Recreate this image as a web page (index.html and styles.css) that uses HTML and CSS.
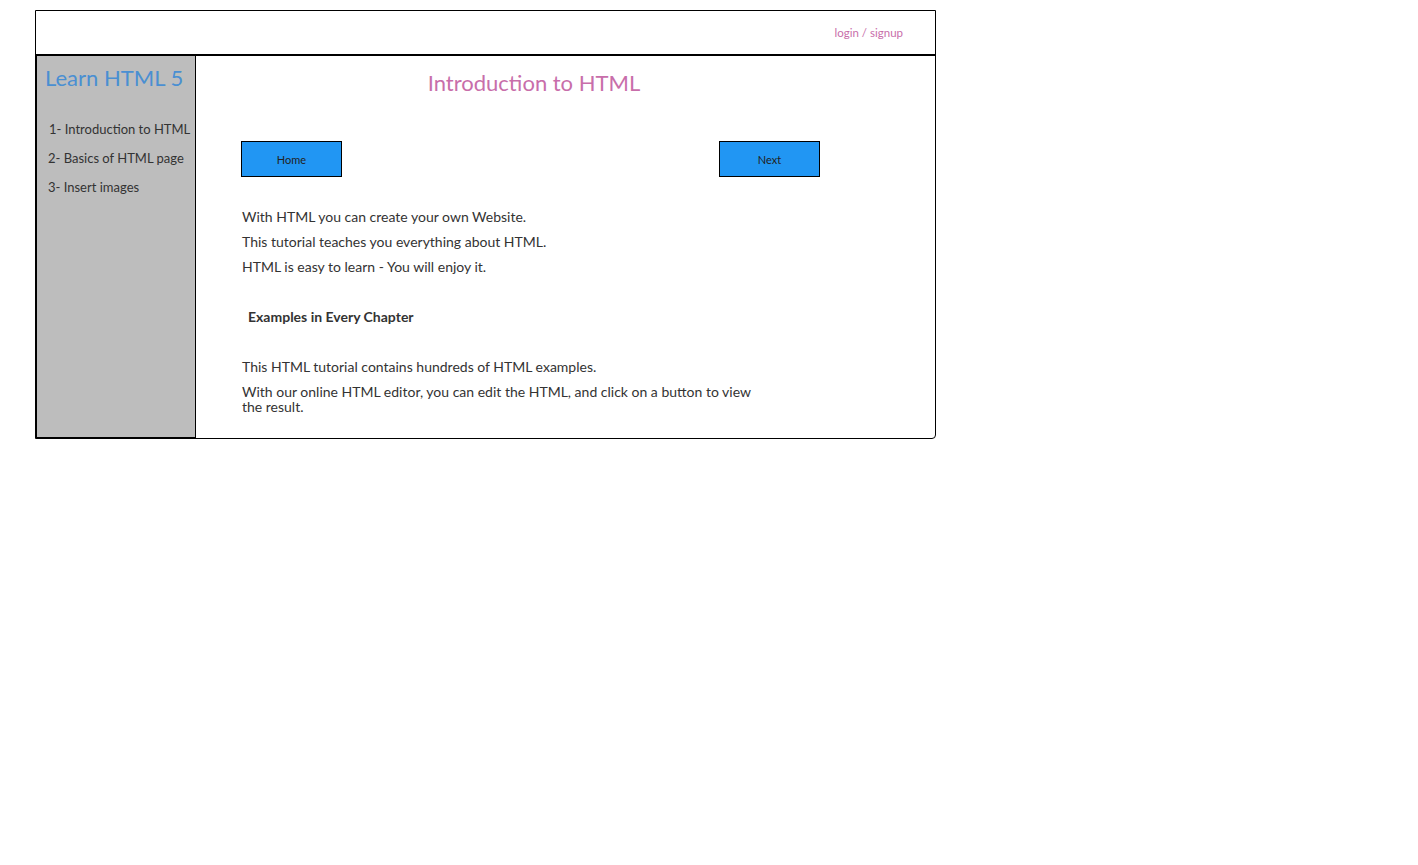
FILE: index.html
```html
<!DOCTYPE html>
<html>
<head>
<meta charset="utf-8">
<link rel="stylesheet" href="styles.css">
</head>
<body>
<div class="frame">
  <header class="header">
    <span class="login">login / signup</span>
  </header>
  <div class="body">
    <aside class="sidebar">
      <div class="brand">Learn HTML 5</div>
      <ul class="nav">
        <li class="nav-item first">1- Introduction to HTML</li>
        <li class="nav-item">2- Basics of HTML page</li>
        <li class="nav-item">3- Insert images</li>
      </ul>
    </aside>
    <main class="main">
      <h1 class="title">Introduction to HTML</h1>
      <div class="buttons">
        <button class="btn">Home</button>
        <button class="btn">Next</button>
      </div>
      <div class="text">
        <p class="line">With HTML you can create your own Website.</p>
        <p class="line">This tutorial teaches you everything about HTML.</p>
        <p class="line">HTML is easy to learn - You will enjoy it.</p>
      </div>
      <h2 class="subhead">Examples in Every Chapter</h2>
      <div class="text">
        <p class="line">This HTML tutorial contains hundreds of HTML examples.</p>
        <p class="line wrap">With our online HTML editor, you can edit the HTML, and click on a button to view the result.</p>
      </div>
    </main>
  </div>
</div>
</body>
</html>
```

FILE: styles.css
```css
* { box-sizing: border-box; }
body {
  margin: 0;
  font-family: "Source Sans Pro", Lato, "Liberation Sans", sans-serif;
  color: #333;
  background: #fff;
}
.frame {
  margin: 10px 0 0 35px;
  width: 901px;
  height: 429px;
  border: 1px solid #000;
  border-radius: 0 0 4px 0;
  display: flex;
  flex-direction: column;
}
.header {
  height: 45px;
  border-bottom: 2px solid #000;
  display: flex;
  justify-content: flex-end;
  align-items: center;
  padding-right: 32px;
}
.login {
  font-size: 11.5px;
  color: #c86eaa;
}
.body {
  flex: 1;
  display: flex;
}
.sidebar {
  width: 160px;
  background: #bdbdbd;
  border-left: 1px solid #000;
  border-right: 1px solid #000;
  border-bottom: 1px solid #000;
  padding: 9px 0 0 8px;
}
.brand {
  font-size: 22px;
  color: #4a8fd2;
  line-height: 26px;
}
.nav {
  list-style: none;
  margin: 24px 0 0 0;
  padding: 0 0 0 3px;
}
.nav-item {
  font-size: 13px;
  line-height: 29px;
  color: #333;
}
.nav-item.first { padding-left: 1px; }
.main {
  flex: 1;
  padding: 14px 0 0 45px;
}
.title {
  margin: 0;
  width: 586px;
  text-align: center;
  font-size: 22px;
  font-weight: normal;
  line-height: 26px;
  color: #c86eaa;
}
.buttons {
  margin-top: 45px;
  width: 579px;
  display: flex;
  justify-content: space-between;
}
.btn {
  width: 101px;
  height: 36px;
  background: #2196f3;
  border: 1px solid #000;
  border-radius: 0;
  font-family: inherit;
  font-size: 11px;
  color: #222;
  padding: 0;
}
.text {
  margin-left: 1px;
  margin-top: 27px;
}
.line {
  margin: 0;
  font-size: 14px;
  line-height: 25px;
}
.line.wrap {
  width: 530px;
  line-height: 15px;
  margin-top: 5px;
}
.subhead {
  margin: 28px 0 0 7px;
  font-size: 14px;
  font-weight: bold;
  line-height: 20px;
}
.subhead + .text { margin-top: 27px; }
```
